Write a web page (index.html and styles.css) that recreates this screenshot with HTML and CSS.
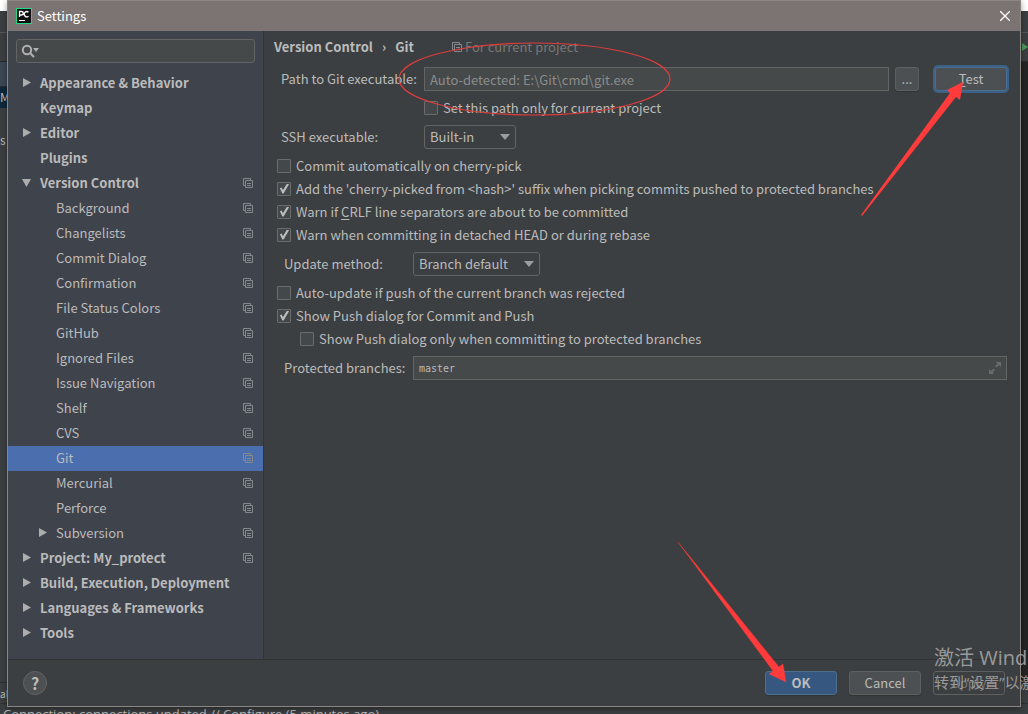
FILE: index.html
```html
<!DOCTYPE html>
<html lang="en">
<head>
<meta charset="utf-8">
<title>Settings</title>
<link rel="stylesheet" href="styles.css">
</head>
<body>
<svg class="defs" aria-hidden="true">
  <symbol id="copy" viewBox="0 0 10 10"><path d="M.5 7.5v-7h7M.5 7.5h2M7.5.5v2M2.500 2.500h7v7h-7zM4 5.500h4M4 7.500h4" fill="none" stroke="currentColor"/></symbol>
  <symbol id="right" viewBox="0 0 8 9"><path d="M0 0L8 4.500L0 9z" fill="currentColor"/></symbol>
  <symbol id="down" viewBox="0 0 9 8"><path d="M0 0H9L4.500 8z" fill="currentColor"/></symbol>
  <symbol id="drop" viewBox="0 0 10 6"><path d="M0 0H10L5 6z" fill="currentColor"/></symbol>
</svg>

<div class="ide" aria-hidden="true">
  <div class="ide-menu"></div>
  <div class="ide-nav"></div>
  <div class="ide-tools"><svg class="run" viewBox="0 0 6 8"><path d="M0 0L6 4L0 8z" fill="#499c54"/></svg></div>
  <div class="ide-main">
    <div class="ide-tree">
      <div class="ide-head"></div>
      <div class="ide-item ide-active">M</div>
      <div class="ide-item">s</div>
    </div>
  </div>
  <div class="ide-tab">al</div>
  <div class="ide-status">Connection: connections updated // Configure (5 minutes ago)</div>
</div>

<main class="dialog">
  <header class="titlebar">
    <svg class="logo" viewBox="0 0 16 16"><rect width="16" height="16" fill="#21d789"/><rect x="1" y="1" width="14" height="14" fill="#111"/><path d="M3.500 9V3.500h2a1.600 1.600 0 0 1 0 3.500h-2M12.500 4.200a2.600 2.600 0 1 0 0 4" fill="none" stroke="#fff" stroke-width="1.300"/><path d="M3 12.500h6" stroke="#fff"/></svg>
    <h1 class="title">Settings</h1>
    <button class="close" aria-label="Close"><svg viewBox="0 0 10 10"><path d="M0 0L10 10M10 0L0 10" stroke="#fff" stroke-width="1.300"/></svg></button>
  </header>

  <div class="body">
    <nav class="sidebar">
      <label class="search">
        <svg viewBox="0 0 20 14"><circle cx="6" cy="6" r="4.200" fill="none" stroke="#afb1b3" stroke-width="2"/><path d="M9 9l4 4" stroke="#afb1b3" stroke-width="2.200"/><path d="M12 4h6l-3 4z" fill="#afb1b3"/></svg>
        <input type="text" aria-label="Search settings">
      </label>
      <ul class="tree">
        <li><a class="row top" href="#"><svg class="arrow"><use href="#right"/></svg><span>Appearance &amp; Behavior</span></a></li>
        <li><a class="row top" href="#"><span>Keymap</span></a></li>
        <li><a class="row top" href="#"><svg class="arrow"><use href="#right"/></svg><span>Editor</span></a></li>
        <li><a class="row top" href="#"><span>Plugins</span></a></li>
        <li><a class="row top" href="#"><svg class="arrow open"><use href="#down"/></svg><span>Version Control</span><svg class="copy"><use href="#copy"/></svg></a></li>
        <li><a class="row sub" href="#"><span>Background</span><svg class="copy"><use href="#copy"/></svg></a></li>
        <li><a class="row sub" href="#"><span>Changelists</span><svg class="copy"><use href="#copy"/></svg></a></li>
        <li><a class="row sub" href="#"><span>Commit Dialog</span><svg class="copy"><use href="#copy"/></svg></a></li>
        <li><a class="row sub" href="#"><span>Confirmation</span><svg class="copy"><use href="#copy"/></svg></a></li>
        <li><a class="row sub" href="#"><span>File Status Colors</span><svg class="copy"><use href="#copy"/></svg></a></li>
        <li><a class="row sub" href="#"><span>GitHub</span><svg class="copy"><use href="#copy"/></svg></a></li>
        <li><a class="row sub" href="#"><span>Ignored Files</span><svg class="copy"><use href="#copy"/></svg></a></li>
        <li><a class="row sub" href="#"><span>Issue Navigation</span><svg class="copy"><use href="#copy"/></svg></a></li>
        <li><a class="row sub" href="#"><span>Shelf</span><svg class="copy"><use href="#copy"/></svg></a></li>
        <li><a class="row sub" href="#"><span>CVS</span><svg class="copy"><use href="#copy"/></svg></a></li>
        <li><a class="row sub selected" href="#" aria-current="page"><span>Git</span><svg class="copy"><use href="#copy"/></svg></a></li>
        <li><a class="row sub" href="#"><span>Mercurial</span><svg class="copy"><use href="#copy"/></svg></a></li>
        <li><a class="row sub" href="#"><span>Perforce</span><svg class="copy"><use href="#copy"/></svg></a></li>
        <li><a class="row sub" href="#"><svg class="arrow"><use href="#right"/></svg><span>Subversion</span><svg class="copy"><use href="#copy"/></svg></a></li>
        <li><a class="row top" href="#"><svg class="arrow"><use href="#right"/></svg><span>Project: My_protect</span><svg class="copy"><use href="#copy"/></svg></a></li>
        <li><a class="row top" href="#"><svg class="arrow"><use href="#right"/></svg><span>Build, Execution, Deployment</span></a></li>
        <li><a class="row top" href="#"><svg class="arrow"><use href="#right"/></svg><span>Languages &amp; Frameworks</span></a></li>
        <li><a class="row top" href="#"><svg class="arrow"><use href="#right"/></svg><span>Tools</span></a></li>
      </ul>
    </nav>

    <section class="content">
      <div class="crumbs">
        <h2 class="crumb">Version Control</h2><span class="crumb">›</span><h2 class="crumb">Git</h2>
        <span class="scope"><svg class="copy"><use href="#copy"/></svg>For current project</span>
      </div>

      <div class="field path">
        <label for="path">Path to Git executable:</label>
        <input class="box muted" id="path" type="text" value="Auto-detected: E:\Git\cmd\git.exe">
        <button class="btn" aria-label="Browse">...</button>
        <button class="btn focus"><u>T</u>est</button>
      </div>
      <label class="check under"><input type="checkbox">Set this path only for current project</label>
      <div class="field path">
        <label for="ssh">SSH executable:</label>
        <span class="pick ssh"><select id="ssh"><option>Built-in</option></select><svg><use href="#drop"/></svg></span>
      </div>

      <div class="checks">
        <label class="check"><input type="checkbox">Commit automatically on cherry-pick</label>
        <label class="check"><input type="checkbox" checked>Add the 'cherry-picked from &lt;hash&gt;' suffix when picking commits pushed to protected branches</label>
        <label class="check"><input type="checkbox" checked><span>Warn if <u>C</u>RLF line separators are about to be committed</span></label>
        <label class="check"><input type="checkbox" checked>Warn when committing in detached HEAD or during rebase</label>
      </div>
      <div class="field">
        <label for="method">Update method:</label>
        <span class="pick method"><select id="method"><option>Branch default</option></select><svg><use href="#drop"/></svg></span>
      </div>
      <div class="checks">
        <label class="check"><input type="checkbox"><span>Auto-update if <u>p</u>ush of the current branch was rejected</span></label>
        <label class="check"><input type="checkbox" checked>Show Push dialog for Commit and Push</label>
        <label class="check nested"><input type="checkbox">Show Push dialog only when committing to protected branches</label>
      </div>
      <div class="field">
        <label for="branches">Protected branches:</label>
        <span class="box expand"><input id="branches" type="text" value="master"><svg viewBox="0 0 12 12"><path d="M7 0h5v5l-2-2-2.500 2.500-1.500-1.500L8.500 2zM0 7l2 2 2.500-2.500L6 8l-2.500 2.500L5 12H0z" fill="#686c6e"/></svg></span>
      </div>
    </section>
  </div>

  <footer class="footer">
    <button class="help" aria-label="Help">?</button>
    <div class="actions">
      <button class="btn primary">OK</button>
      <button class="btn">Cancel</button>
      <button class="btn disabled" disabled>Apply</button>
    </div>
  </footer>
</main>

<div class="watermark"><p class="mark-title">激活 Windows</p><p class="mark-text">转到“设置”以激活 Windows。</p></div>

<svg class="marks" viewBox="0 0 1028 714" aria-hidden="true">
  <ellipse cx="534.500" cy="79" rx="135.500" ry="36" fill="none" stroke="#e03c3c" stroke-width="1.200"/>
  <path d="M861 215L950 93L947 90L963 82L960 100L956 97L862 216z" fill="#ff3b3b"/>
  <path d="M678 542L773 671L769 674L786 682L783 664L779 667z" fill="#ff3b3b" stroke="#ff3b3b" stroke-width=".4"/>
</svg>
</body>
</html>
```

FILE: styles.css
```css
* { box-sizing: border-box; }
body { margin: 0; min-height: 100vh; overflow: hidden; background: #3c3f41; color: #bbbbbb; font: 13px/20px "Noto Sans CJK SC", sans-serif; }
h1, h2, p, ul { margin: 0; padding: 0; font: inherit; list-style: none; }
button, input, select { margin: 0; font: inherit; color: inherit; }
a { color: inherit; text-decoration: none; }
u { text-underline-offset: 2px; }
svg { display: block; flex: none; }
.defs { display: none; }

.ide { position: absolute; inset: 0; display: flex; flex-direction: column; overflow: hidden; font-size: 12px; }
.ide-menu { height: 11px; background: #ffffff; }
.ide-nav { height: 22px; border-bottom: 1px solid #555555; }
.ide-tools { display: flex; justify-content: flex-end; align-items: center; height: 29px; border-bottom: 1px solid #2b2b2b; }
.run { width: 6px; height: 8px; }
.ide-main { flex: 1; display: flex; background: #242424; }
.ide-tree { width: 300px; background: #3c3f41; }
.ide-head { height: 25px; background: #3b4754; border-bottom: 1px solid #2b2b2b; }
.ide-item { height: 42px; }
.ide-active { height: 21px; margin-bottom: 22px; background: #0d293e; }
.ide-tab { height: 22px; border: solid #2f3132; border-width: 1px 0; font-size: 10px; line-height: 22px; }
.ide-status { height: 10px; overflow: hidden; padding-left: 3px; font-family: "Open Sans", sans-serif; font-size: 13px; }

.dialog { position: relative; display: flex; flex-direction: column; min-height: calc(100vh - 7px); margin: 0 7px; border: 1px solid #8c8683; background: #3c3f41; box-shadow: 0 2px 6px #00000066; }
.titlebar { display: flex; align-items: center; gap: 5px; height: 30px; padding: 0 10px 0 8px; background: #7b7472; color: #ffffff; }
.logo { width: 16px; height: 16px; }
.title { flex: 1; }
.close { padding: 0; border: 0; background: none; }
.close svg { width: 10px; height: 10px; }
.body { flex: 1; display: flex; }

.sidebar { width: 256px; flex: none; padding-top: 8px; border-right: 1px solid #323437; background: #3f434c; }
.search { display: flex; align-items: center; height: 24px; margin: 0 8px 8px; padding-left: 4px; border: 1px solid #646464; border-radius: 3px; background: #45494a; }
.search svg { width: 20px; height: 14px; }
.search input { flex: 1; min-width: 0; border: 0; outline: 0; background: none; }
.row { display: flex; align-items: center; height: 25px; padding: 0 10px 2px 0; }
.row span { flex: 1; }
.row.top { padding-left: 32px; font-weight: 700; }
.row.sub { padding-left: 48px; }
.arrow { width: 8px; height: 9px; margin: 0 9px 0 -17px; color: #adadad; }
.open { width: 9px; height: 8px; margin: 0 9px 0 -18px; }
.copy { width: 10px; height: 10px; color: #83898d; }
.selected { background: #4b6eaf; }

.content { flex: 1; min-width: 0; padding: 6px 13px; }
.crumbs { display: flex; align-items: center; gap: 9px; height: 20px; margin: 0 0 10px -3px; }
.crumb { font-weight: 700; }
.scope { display: flex; align-items: center; gap: 3px; margin-left: 29px; color: #777777; }
.field { display: grid; grid-template-columns: 129px 1fr; align-items: center; height: 24px; padding-left: 7px; }
.path { grid-template-columns: 143px minmax(0, 1fr) 24px 88px; padding-left: 4px; }
.box { min-width: 0; height: 24px; padding: 0 5px; border: 1px solid #646464; border-radius: 0; outline: 0; background: #45494a; }
.muted { margin-right: 6px; color: #8c8c8c; }
.btn { height: 24px; padding: 0; border: 1px solid #5e6060; border-radius: 3px; background: #4c5052; box-shadow: 0 1px 1px #00000033; }
.focus { margin: 0 0 0 16px; border-color: #466d94; box-shadow: 0 0 0 2px #3d6185; }
.check { display: flex; align-items: center; gap: 5px; height: 23px; }
.check input { display: grid; place-items: center; flex: none; width: 14px; height: 14px; appearance: none; border: 1px solid #6b6b6b; border-radius: 1px; background: #43494a; }
.check input:checked::before { content: ""; width: 10px; height: 10px; background: #bbbbbb; clip-path: polygon(8% 48%, 24% 40%, 40% 66%, 80% 0, 100% 8%, 46% 100%, 34% 100%); }
.under { margin: 5px 0 6px 147px; }
.checks { padding: 5px 0 6px; }
.nested { margin-left: 23px; }
.pick { display: grid; align-items: center; }
.pick > * { grid-area: 1 / 1; }
.pick select { width: 100%; height: 24px; padding: 0 5px; appearance: none; border: 1px solid #646464; border-radius: 3px; outline: 0; background: #3c3f41; }
.pick svg { justify-self: end; width: 10px; height: 6px; margin-right: 6px; color: #9a9da0; pointer-events: none; }
.ssh { width: 92px; }
.method { width: 127px; }
.expand { display: flex; align-items: center; }
.expand input { flex: 1; min-width: 0; padding: 0; border: 0; outline: 0; background: none; font: 10px "DejaVu Sans Mono", monospace; }
.expand svg { width: 12px; height: 12px; }

.footer { display: flex; align-items: center; justify-content: space-between; height: 47px; padding: 0 15px; border-top: 1px solid #323232; }
.help { width: 24px; height: 24px; padding: 0; border: 1px solid #646464; border-radius: 50%; background: #4c5052; font-weight: 700; font-size: 16px; line-height: 20px; }
.actions { display: flex; gap: 12px; }
.actions .btn { width: 72px; }
.actions .primary { border-color: #4c708c; background: #365880; font-weight: 700; }
.actions .disabled { background: none; color: #777777; box-shadow: none; }

.watermark { position: absolute; right: 0; bottom: 22px; width: 94px; overflow: hidden; white-space: nowrap; color: #999999; font-family: "Open Sans", "Noto Sans CJK SC", sans-serif; pointer-events: none; }
.mark-title { font-size: 20px; line-height: 28px; }
.mark-text { font-size: 15px; line-height: 20px; }
.marks { position: absolute; top: 0; left: 0; width: 1028px; height: 714px; pointer-events: none; }
```
